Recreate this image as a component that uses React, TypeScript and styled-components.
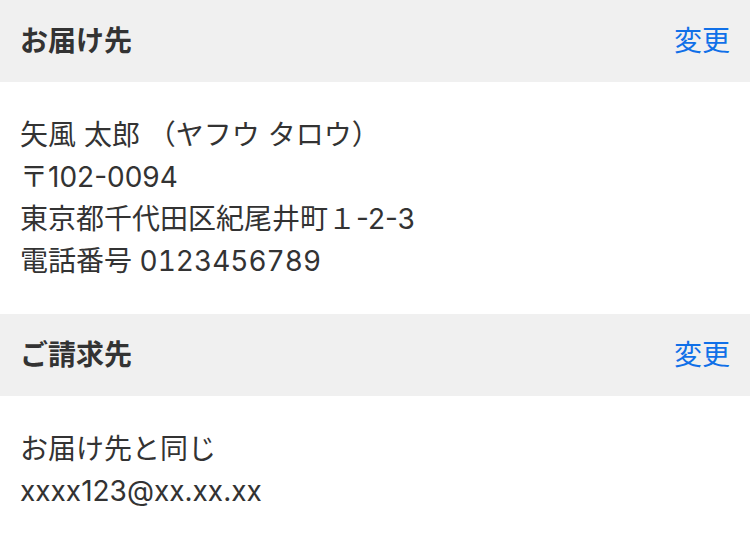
import React from "react";
import styled, { createGlobalStyle } from "styled-components";

const Global = createGlobalStyle`
  html, body { margin: 0; padding: 0; background: #fff; }
  body { font-family: Inter, "Noto Sans CJK JP", "Noto Sans", sans-serif; color: #333; }
`;

const Page = styled.div`
  width: 750px;
  display: flex;
  flex-direction: column;
`;

const SectionHeader = styled.div`
  height: 82px;
  background: #f0f0f0;
  display: flex;
  align-items: center;
  justify-content: space-between;
  padding: 0 20px;
  box-sizing: border-box;
`;

const Title = styled.h2`
  margin: 0;
  font-size: 28px;
  font-weight: 700;
  color: #333;
  line-height: 1;
`;

const ChangeLink = styled.a`
  font-size: 28px;
  color: #1070e8;
  text-decoration: none;
  line-height: 1;
`;

const Body = styled.div`
  padding: 32px 20px;
  display: flex;
  flex-direction: column;
`;

const Line = styled.div<{ $tabular?: boolean }>`
  font-size: 28px;
  line-height: 42px;
  color: #333;
  white-space: pre;
  font-variant-numeric: ${(p) => (p.$tabular ? "tabular-nums" : "normal")};
`;

export default function App() {
  return (
    <Page>
      <Global />
      <SectionHeader>
        <Title>お届け先</Title>
        <ChangeLink href="#">変更</ChangeLink>
      </SectionHeader>
      <Body>
        <Line>矢風 太郎 （ヤフウ タロウ）</Line>
        <Line>〒102-0094</Line>
        <Line>東京都千代田区紀尾井町１-2-3</Line>
        <Line $tabular>電話番号 0123456789</Line>
      </Body>
      <SectionHeader>
        <Title>ご請求先</Title>
        <ChangeLink href="#">変更</ChangeLink>
      </SectionHeader>
      <Body>
        <Line>お届け先と同じ</Line>
        <Line>xxxx123@xx.xx.xx</Line>
      </Body>
    </Page>
  );
}
